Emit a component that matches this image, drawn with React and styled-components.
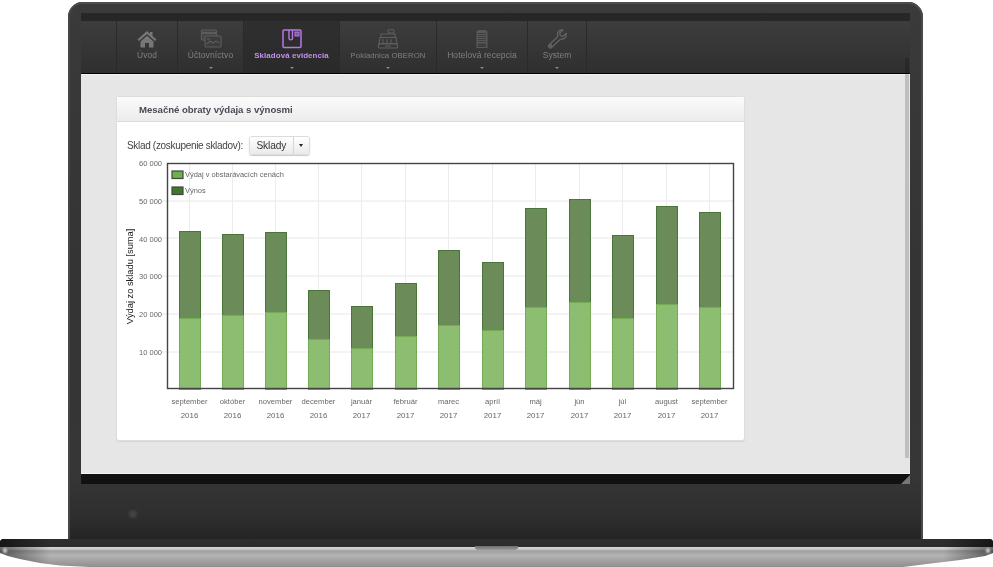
import React from "react";
import styled, { createGlobalStyle } from "styled-components";

const Global = createGlobalStyle`
  html, body { margin: 0; padding: 0; background: #fff; }
  body { font-family: "Liberation Sans", Arial, sans-serif; width: 993px; height: 567px; overflow: hidden; }
`;
const Stage = styled.div`
  width: 993px; height: 567px; display: flex; flex-direction: column; align-items: flex-start; padding-top: 2px; box-sizing: border-box; background: #fff;
  position: relative; filter: blur(0.3px);
`;
const Lid = styled.div`
  margin-left: 68px; width: 855px; height: 537px; box-sizing: border-box; flex: none;
  padding: 11px 13px 0 13px; border-radius: 15px 15px 0 0;
  background: linear-gradient(#3a3a3a, #343434 50%, #363636 88%, #2e2e2e 96%, #242424);
  box-shadow: inset 0 2px 0 #4d4d4d, inset 2px 0 0 #464646, inset -2px 0 0 #4a4a4a;
  display: flex; flex-direction: column;
`;
const Screen = styled.div`
  height: 471px; display: flex; flex-direction: column; background: #111; flex: none; position: relative;
`;
const TopBand = styled.div`height: 8px; background: #272727; flex: none;`;
const Nav = styled.nav`
  height: 52px; flex: none; display: flex; padding-left: 35px; box-sizing: border-box;
  background: linear-gradient(#3d3d3d, #2f2f2f);
`;
const NavItem = styled.div`
  width: ${p => p.$w}px; box-sizing: border-box; flex: none; display: flex; flex-direction: column; align-items: center;
  border-left: 1px solid #2a2a2a; padding-top: 8px;
  background: ${p => p.$active ? "linear-gradient(#2f2f2f, #2a2a2a)" : "none"};
  ${p => p.$last ? "border-right: 1px solid #2a2a2a;" : ""}
`;
const NavIcon = styled.svg`width: 22px; height: 20px; display: block; flex: none;`;
const NavLabel = styled.span`
  font-size: ${p => p.$size}px; font-weight: ${p => p.$active ? 700 : 400}; line-height: 11px; margin-top: 1px; white-space: nowrap;
  color: ${p => p.$active ? "#c58ff0" : "#808080"}; letter-spacing: 0.1px;
`;
const Caret = styled.i`
  display: block; width: 0; height: 0; margin-top: 6px;
  border-left: 2px solid transparent; border-right: 2px solid transparent; border-top: 2px solid #8a8a8a;
`;
const Divider = styled.div`height: 2px; flex: none; background: linear-gradient(#000 50%, #f4f4f4 50%);`;
const Content = styled.main`
  flex: 1; background: #e6e6e6; padding: 21px 0 0 35px; min-height: 0;
`;
const Rule = styled.div`height: 1px; flex: none; background: #f4f4f4;`;
const FootBand = styled.div`height: 10px; flex: none;`;
const Scroll = styled.div`
  position: absolute; right: 1px; top: 45px; width: 4px; height: 400px; background: rgba(0,0,0,.17);
`;
const Card = styled.section`
  width: 629px; height: 345px; box-sizing: border-box; background: #fff; border-radius: 3px;
  border: 1px solid #dedede; box-shadow: 0 1px 1px #d4d4d4;
`;
const CardHead = styled.header`
  height: 25px; box-sizing: border-box; padding: 0 0 0 22px; display: flex; align-items: center;
  background: linear-gradient(#fbfbfb, #ececec); border-bottom: 1px solid #dcdcdc;
  font-size: 9.6px; font-weight: 700; color: #4a4a55; letter-spacing: -0.03px;
`;
const FilterRow = styled.div`
  display: flex; align-items: center; padding: 14px 0 0 10px; height: 19px;
  font-size: 10px; letter-spacing: -0.32px; color: #444;
`;
const BtnGroup = styled.div`
  display: inline-flex; height: 19px; margin-left: 6px; border-radius: 3px; overflow: hidden;
  border: 1px solid #dcdcdc; box-shadow: 0 1px 1px #ccc; box-sizing: border-box;
`;
const Btn = styled.div`
  width: 43px; display: flex; align-items: center; justify-content: center; font-size: 10.2px; letter-spacing: -0.1px; color: #333;
  background: linear-gradient(#fff, #eaeaea); border-right: 1px solid #d6d6d6;
`;
const BtnCaret = styled.div`
  width: 15px; display: flex; align-items: center; justify-content: center; background: linear-gradient(#fff, #eaeaea);
  &::after { content: ""; border-left: 2.5px solid transparent; border-right: 2.5px solid transparent; border-top: 3px solid #222; }
`;
const ChartSvg = styled.svg`display: block; width: 629px; height: 285px; overflow: visible;`;
const Deck = styled.div`
  flex: none; width: 993px; height: 28px; position: relative;
  background:
    linear-gradient(90deg, rgba(0,0,0,.5), rgba(0,0,0,0) 50px, rgba(0,0,0,0) 943px, rgba(0,0,0,.5)),
    linear-gradient(#2e2e2e 0, #2c2c2c 27%, #d4d4d4 29%, #c8c8c8 37%, #a0a0a0 42%, #b4b4b4 58%, #8e8e8e 100%);
  clip-path: polygon(2px 0, 991px 0, 993px 2px, 993px 14px, 985px 17px, 960px 21px, 927px 25px, 903px 28px, 90px 28px, 60px 26.5px, 40px 24px, 20px 20px, 8px 17px, 0 14px, 0 2px);
`;
const Glint = styled.div`
  position: absolute; top: 9px; ${p => p.$side}: 3px; width: 4px; height: 5px; border-radius: 50%; background: #d8d8d8; filter: blur(1px);
`;
const Notch = styled.div`
  position: absolute; left: 475px; top: 7px; width: 43px; height: 4px; border-radius: 0 0 3px 3px;
  background: linear-gradient(#6e6e6e, #9a9a9a);
`;
const Camera = styled.div`
  position: absolute; left: 129px; top: 510px; width: 8px; height: 8px; border-radius: 50%; background: #424242; filter: blur(1px);
`;
const Grip = styled.svg`position: absolute; right: 0; bottom: 0; width: 9px; height: 9px;`;

const bars = [
  ["september","2016",318,231],["október","2016",315,234],["november","2016",312,232],["december","2016",339,290],
  ["január","2017",348,306],["február","2017",336,283],["marec","2017",325,250],["apríl","2017",330,262],
  ["máj","2017",307,208],["jún","2017",302,199],["júl","2017",318,235],["august","2017",304,206],["september","2017",307,212],
];
const xs = [190,233,276,319,362,406,449,493,536,580,623,667,710];
const OX = 117, OY = 155;

function Chart() {
  return (
    <ChartSvg viewBox={`${OX} ${OY} 629 285`} fontFamily="Liberation Sans, Arial, sans-serif">
      <rect x="167.5" y="163.5" width="566" height="225" fill="#fff" />
      {[352,314,276,238,201].map(y => <line key={y} x1="161" x2="733" y1={y} y2={y} stroke="#e8e8e8" />)}
      {xs.map(x => <line key={x} x1={x-0.5} x2={x-0.5} y1="164" y2="389" stroke="#ececec" />)}
      {[[60,166],[50,204],[40,242],[30,279],[20,317],[10,355]].map(([v,y]) => (
        <text key={v} x="162" y={y} textAnchor="end" fontSize="7.5" fill="#666">{v} 000</text>
      ))}
      <text transform="translate(133 276.5) rotate(-90)" textAnchor="middle" fontSize="9.3" fill="#222">Výdaj zo skladu [suma]</text>
      {bars.map(([m,yr,l,d],i) => (
        <g key={i}>
          <rect x={xs[i]-11} y={d} width="22" height={l-d} fill="#6b8c58" />
          <rect x={xs[i]-10.5} y={d+0.5} width="21" height={l-d} fill="none" stroke="#4a7438" />
          <rect x={xs[i]-11} y={l} width="22" height={389-l} fill="#8dbd71" />
          <rect x={xs[i]-10.5} y={l+0.5} width="21" height={389-l} fill="none" stroke="#73ab55" />
          <text x={xs[i]-0.5} y="404" textAnchor="middle" fontSize="7.6" fill="#666">{m}</text>
          <text x={xs[i]-0.5} y="418" textAnchor="middle" fontSize="7.9" fill="#666">{yr}</text>
        </g>
      ))}
      <rect x="167.5" y="163.5" width="566" height="225" fill="none" stroke="#444" strokeWidth="1.4" />
      <rect x="172" y="171" width="11" height="7.5" fill="#6db14c" stroke="#444" strokeWidth="1.2" />
      <text x="185" y="177" fontSize="7.45" fill="#666">Výdaj v obstarávacích cenách</text>
      <rect x="172" y="187" width="11" height="7.5" fill="#3f7a2c" stroke="#444" strokeWidth="1.2" />
      <text x="185" y="193" fontSize="7.45" fill="#666">Výnos</text>
    </ChartSvg>
  );
}

const Home = () => (
  <NavIcon viewBox="0 0 22 20"><path d="M11 2 L1.5 10.5 L3 12 L11 5 L19 12 L20.5 10.5 L16.5 7 V3 H14 V4.8 Z M4.5 12.5 L11 6.8 L17.5 12.5 V18.5 H13 V14 H9 V18.5 H4.5 Z" fill="#777" /></NavIcon>
);
const Accounts = () => (
  <NavIcon viewBox="0 0 22 20" fill="none" stroke="#5c5c5c" strokeWidth="1.2">
    <rect x="1.5" y="1" width="15" height="10" rx="1" fill="#444" />
    <path d="M1.5 4h15" strokeWidth="2" />
    <rect x="5" y="7" width="16" height="11" rx="1" fill="#3c3c3c" />
    <path d="M7 15l3-3 3 2 3-2 3 2" />
    <path d="M7 10h3" />
  </NavIcon>
);
const BoxIcon = () => (
  <NavIcon viewBox="0 0 22 20" fill="none" stroke="#b478e6" strokeWidth="1.5">
    <rect x="2" y="1" width="18" height="17.5" rx="1" />
    <path d="M8 1v8.5c0 1.8 3.5 1.8 3.5 0V1" strokeWidth="1.4" />
    <rect x="14" y="3" width="4" height="4" strokeWidth="1" fill="#7a5a9a" />
  </NavIcon>
);
const Register = () => (
  <NavIcon viewBox="0 0 22 20" fill="none" stroke="#5e5e5e" strokeWidth="1.1">
    <rect x="11" y="0.8" width="6" height="3.2" rx="1" />
    <path d="M4 8V5h14v3" />
    <path d="M3 8.5h16l1 6H2z" />
    <rect x="1.5" y="15" width="19" height="4" rx="0.8" />
    <path d="M5 11h2M9 11h2M13 11h2M5 13h2M9 13h2M13 13h2M8 17h6" />
  </NavIcon>
);
const Building = () => (
  <NavIcon viewBox="0 0 22 20" fill="#585858">
    <path d="M5.5 2.5 L7.5 1 H14.5 L16.5 2.5 V19 H5.5 Z" />
    <g fill="#3e3e3e">
      {[4,6,8,10,12].map(y => <rect key={y} x="7" y={y} width="8" height=".9" />)}
      <rect x="7" y="14.5" width="8" height="3.5" />
    </g>
  </NavIcon>
);
const Wrench = () => (
  <NavIcon viewBox="0 0 22 20" fill="none" stroke="#646464" strokeWidth="1.3" strokeLinejoin="round">
    <path d="M20 4.5 L16.5 7.5 L14.2 6.5 L13.8 4 L17 1 C14 .2 11 2.5 11.5 6 C11.6 7 11.8 7.5 11.4 8 L3 16 C1.5 18 4 20 5.5 18.5 L14 10.5 C14.8 10 15.3 10.2 16 10.2 C18.8 10.2 20.8 7.5 20 4.5 Z" />
    <circle cx="4.7" cy="16.8" r=".8" />
  </NavIcon>
);

const navItems = [
  { label: "Úvod", w: 61, size: 8.4, Icon: Home },
  { label: "Účtovníctvo", w: 66, size: 8.5, Icon: Accounts, caret: true },
  { label: "Skladová evidencia", w: 96, size: 7.9, Icon: BoxIcon, caret: true, active: true },
  { label: "Pokladnica OBERON", w: 97, size: 7.7, Icon: Register, caret: true },
  { label: "Hotelová recepcia", w: 91, size: 8.5, Icon: Building, caret: true },
  { label: "System", w: 60, size: 8.4, Icon: Wrench, caret: true, last: true },
];

export default function App() {
  return (
    <Stage>
      <Global />
      <Lid>
        <Screen>
          <TopBand />
          <Nav>
            {navItems.map(({ label, w, size, Icon, caret, active, last }) => (
              <NavItem key={label} $w={w} $active={active} $last={last}>
                <Icon />
                <NavLabel $active={active} $size={size}>{label}</NavLabel>
                {caret && <Caret />}
              </NavItem>
            ))}
          </Nav>
          <Divider />
          <Content>
            <Card>
              <CardHead>Mesačné obraty výdaja s výnosmi</CardHead>
              <FilterRow>
                Sklad (zoskupenie skladov):
                <BtnGroup><Btn>Sklady</Btn><BtnCaret /></BtnGroup>
              </FilterRow>
              <Chart />
            </Card>
          </Content>
          <Rule />
          <FootBand />
          <Scroll />
          <Grip viewBox="0 0 9 9"><path d="M9 0 L0 9 H9 Z" fill="#777" /></Grip>
        </Screen>
      </Lid>
      <Camera />
      <Deck><Notch /><Glint $side="left" /><Glint $side="right" /></Deck>
    </Stage>
  );
}
